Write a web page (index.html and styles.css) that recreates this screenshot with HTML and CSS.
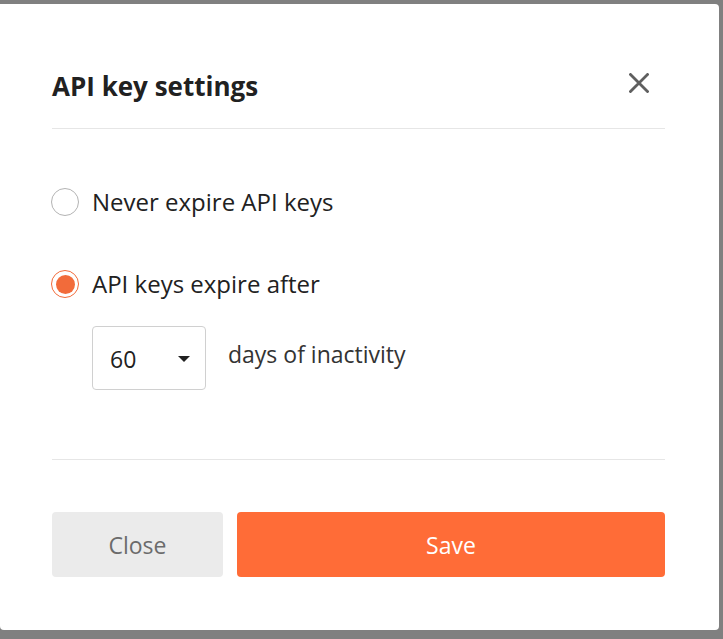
FILE: index.html
```html
<!DOCTYPE html>
<html>
<head>
<meta charset="utf-8">
<link rel="stylesheet" href="styles.css">
</head>
<body>
<div class="modal">
  <div class="header">
    <h1 class="title">API key settings</h1>
    <button class="close-x" aria-label="Close">
      <svg width="20" height="20" viewBox="0 0 20 20"><path d="M1.5 1.5 L18.5 18.5 M18.5 1.5 L1.5 18.5" stroke="#5f5f5f" stroke-width="2.8" stroke-linecap="square" fill="none"/></svg>
    </button>
  </div>
  <div class="body">
    <label class="radio-row">
      <span class="radio"></span>
      <span class="label">Never expire API keys</span>
    </label>
    <label class="radio-row second">
      <span class="radio checked"><span class="dot"></span></span>
      <span class="label">API keys expire after</span>
    </label>
    <div class="select-row">
      <div class="select">
        <span class="value">60</span>
        <span class="caret"></span>
      </div>
      <span class="suffix">days of inactivity</span>
    </div>
  </div>
  <div class="footer">
    <button class="btn btn-close">Close</button>
    <button class="btn btn-save">Save</button>
  </div>
</div>
</body>
</html>
```
FILE: styles.css
```css
html, body {
  margin: 0;
  padding: 0;
}
body {
  background: #808080;
  width: 723px;
  height: 639px;
  overflow: hidden;
  font-family: "Open Sans", "Noto Sans", sans-serif;
  color: #212121;
}
.modal {
  margin-top: 4px;
  width: 719px;
  height: 626px;
  background: #fff;
  border-radius: 0 4px 4px 4px;
  box-sizing: border-box;
  padding: 0 54px 0 52px;
  display: flex;
  flex-direction: column;
}
.header {
  display: flex;
  align-items: center;
  justify-content: space-between;
  height: 125px;
  box-sizing: border-box;
  padding-top: 64px;
  padding-bottom: 25px;
  border-bottom: 1px solid #e6e6e6;
}
.title {
  margin: 0;
  font-size: 26px;
  font-weight: 700;
  line-height: 36px;
  color: #212121;
}
.close-x {
  border: 0;
  background: none;
  padding: 0;
  width: 20px;
  height: 20px;
  margin-right: 16px;
  margin-top: -6px;
  display: flex;
}
.body {
  padding-top: 59px;
  padding-bottom: 69px;
  border-bottom: 1px solid #e6e6e6;
  display: flex;
  flex-direction: column;
}
.radio-row {
  display: flex;
  align-items: center;
  gap: 13px;
  height: 28px;
  margin-left: -1px;
}
.radio-row.second {
  margin-top: 54px;
}
.radio {
  width: 28px;
  height: 28px;
  box-sizing: border-box;
  border: 1.5px solid #b3b3b3;
  border-radius: 50%;
  display: flex;
  align-items: center;
  justify-content: center;
  flex: none;
}
.radio.checked {
  border: 1.5px solid #f26b3a;
}
.radio .dot {
  width: 19px;
  height: 19px;
  border-radius: 50%;
  background: #f26b3a;
}
.label {
  font-size: 24px;
  line-height: 28px;
  color: #212121;
}
.select-row {
  display: flex;
  align-items: center;
  margin-top: 28px;
  margin-left: 40px;
  gap: 22px;
}
.select {
  width: 114px;
  height: 64px;
  box-sizing: border-box;
  border: 1px solid #d0d0d0;
  border-radius: 4px;
  display: flex;
  align-items: center;
  justify-content: space-between;
  padding: 0 15px 0 17px;
}
.value {
  font-size: 23px;
  color: #212121;
  margin-top: 1px;
}
.caret {
  width: 0;
  height: 0;
  border-left: 6px solid transparent;
  border-right: 6px solid transparent;
  border-top: 6px solid #212121;
  margin-top: 2px;
}
.suffix {
  font-size: 23px;
  color: #333;
  margin-top: -8px;
}
.footer {
  display: flex;
  gap: 14px;
  padding-top: 52px;
}
.btn {
  height: 65px;
  border: 0;
  border-radius: 4px;
  font-family: "Open Sans", "Noto Sans", sans-serif;
  font-size: 23px;
  padding: 0;
}
.btn-close {
  width: 171px;
  background: #ebebeb;
  color: #6b6b6b;
}
.btn-save {
  flex: 1;
  background: #ff6c37;
  color: #fff;
}
```
